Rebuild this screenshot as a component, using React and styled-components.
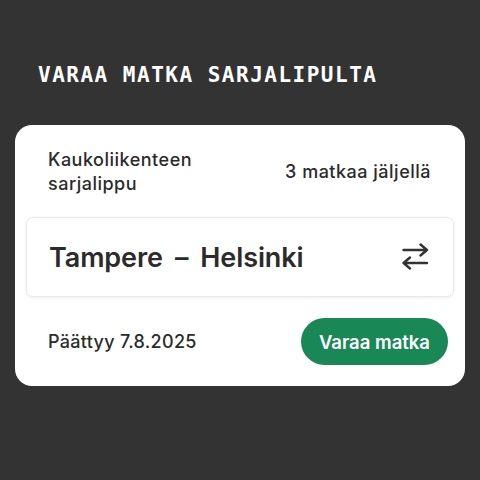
import React from 'react';
import styled, { createGlobalStyle } from 'styled-components';

const GlobalStyle = createGlobalStyle`
    html, body {
        margin: 0;
        padding: 0;
        background: #333333;
    }
    body {
        font-family: Inter, "Noto Sans", sans-serif;
        color: #2b2b2b;
    }
`;

const Page = styled.div`
    width: 480px;
    height: 480px;
    box-sizing: border-box;
    padding: 63px 15px 0;
`;

const Heading = styled.h1`
    margin: 0 0 37px 23px;
    font-family: "DejaVu Sans Mono", "Liberation Mono", monospace;
    font-weight: 700;
    font-size: 21px;
    line-height: 25px;
    letter-spacing: 1.5px;
    color: #ffffff;
`;

const Card = styled.section`
    background: #ffffff;
    border-radius: 17px;
    padding: 23px 11px 21px;
`;

const Header = styled.div`
    display: flex;
    justify-content: space-between;
    align-items: center;
    padding: 0 23px 0 22px;
    font-size: 18px;
    line-height: 24px;
    font-weight: 500;
    letter-spacing: 0.5px;
`;

const TicketName = styled.div`
    width: 170px;
`;

const Route = styled.div`
    margin-top: 21px;
    height: 80px;
    box-sizing: border-box;
    display: flex;
    align-items: center;
    justify-content: space-between;
    padding: 0 24px 0 22px;
    border: 1px solid #e8e8e8;
    border-radius: 7px;
    box-shadow: 0 1px 3px rgba(0, 0, 0, 0.08);
`;

const Stations = styled.span`
    font-size: 27px;
    font-weight: 600;
    letter-spacing: -0.1px;
    color: #2b2b2b;
`;

const Dash = styled.span`
    margin: 0 12px;
`;

const Footer = styled.div`
    margin-top: 21px;
    display: flex;
    align-items: center;
    justify-content: space-between;
    padding: 0 6px 0 22px;
`;

const EndDate = styled.span`
    font-size: 18px;
    font-weight: 500;
    letter-spacing: 0.3px;
`;

const BookButton = styled.button`
    height: 47px;
    padding: 0 18px;
    border: none;
    border-radius: 24px;
    background: #1a8756;
    color: #ffffff;
    font-family: Inter, "Noto Sans", sans-serif;
    font-size: 18.5px;
    font-weight: 600;
    cursor: pointer;
`;

const SwapIcon = () => (
    <svg width="28" height="28" viewBox="0 0 28 28" fill="none" stroke="#333333"
        strokeWidth="2.4" strokeLinecap="round" strokeLinejoin="round">
        <path d="M2.5 7 H26 M19.5 1.5 L26 7 L19.5 12.5" />
        <path d="M26 20 H2.5 M9 14.5 L2.5 20 L9 25.5" />
    </svg>
);

export default function App() {
    return (
        <Page>
            <GlobalStyle />
            <Heading>VARAA MATKA SARJALIPULTA</Heading>
            <Card>
                <Header>
                    <TicketName>Kaukoliikenteen sarjalippu</TicketName>
                    <span>3 matkaa jäljellä</span>
                </Header>
                <Route>
                    <Stations>Tampere<Dash>–</Dash>Helsinki</Stations>
                    <SwapIcon />
                </Route>
                <Footer>
                    <EndDate>Päättyy 7.8.2025</EndDate>
                    <BookButton>Varaa matka</BookButton>
                </Footer>
            </Card>
        </Page>
    );
}
